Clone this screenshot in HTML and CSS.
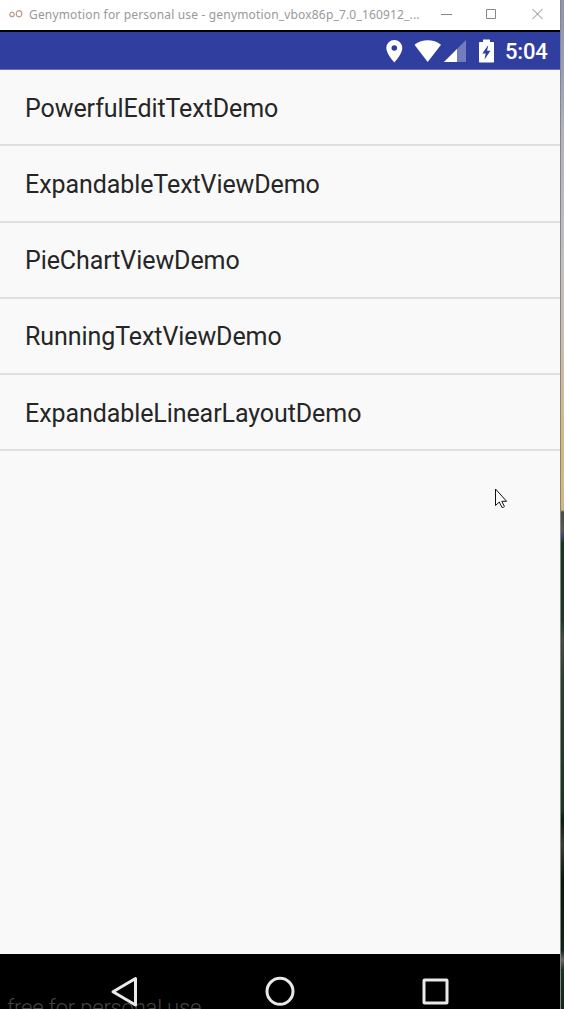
FILE: index.html
```
<!DOCTYPE html>
<html lang="en">
<head>
<meta charset="utf-8">
<title>Genymotion</title>
<link rel="stylesheet" href="styles.css">
</head>
<body>
<div class="desktop">
  <main class="window">
    <header class="titlebar">
      <svg class="logo" width="14" height="8" viewBox="0 0 14 8"><circle cx="3" cy="4.4" r="2.2"/><ellipse cx="10" cy="3.8" rx="2.8" ry="3.1"/></svg>
      <span class="title">Genymotion for personal use - genymotion_vbox86p_7.0_160912_...</span>
      <svg class="controls" width="108" height="12" viewBox="0 0 108 12"><path d="M2 6.500h11M47.500 1.500h9v9h-9zM93.500 1l10 10M103.500 1l-10 10"/></svg>
    </header>
    <div class="statusbar">
      <svg class="status-icons" width="112" height="24" viewBox="0 0 112 24">
        <path fill-rule="evenodd" d="M8.300 0a8 8 0 0 0-8 8c0 5.800 8 14.500 8 14.500s8-8.700 8-14.500a8 8 0 0 0-8-8zm0 5.200a2.800 2.800 0 1 1 0 5.600 2.800 2.800 0 0 1 0-5.600z"/>
        <path d="M28.500 4.700C36 -1.200 47.500 -1.200 55 4.700L41.700 22z"/>
        <path class="faint" d="M80 0v22H58z"/><path d="M71 9v13H58z"/>
        <path fill-rule="evenodd" d="M97 -.5h7v2.500h3.200q.8 0 .8.800v18.900q0 .8-.8.800h-13.400q-.8 0-.8-.8v-18.900q0-.8.8-.8h3.200zM102.300 5l-6 8.500h3.400l-1.200 6 6-8.700h-3.400z"/>
      </svg>
      <span class="clock">5:04</span>
    </div>
    <ul class="demos">
      <li class="demo"><span class="demo-name">PowerfulEditTextDemo</span></li>
      <li class="demo"><span class="demo-name">ExpandableTextViewDemo</span></li>
      <li class="demo"><span class="demo-name">PieChartViewDemo</span></li>
      <li class="demo"><span class="demo-name">RunningTextViewDemo</span></li>
      <li class="demo"><span class="demo-name">ExpandableLinearLayoutDemo</span></li>
    </ul>
    <footer class="navbar">
      <span class="watermark">free for personal use</span>
      <svg class="nav-icons" width="560" height="55" viewBox="0 0 560 55"><path d="M135.500 24.500v26.500L113 37.700z"/><circle cx="280" cy="37.300" r="13"/><rect x="424" y="26" width="23" height="23" rx=".5"/></svg>
    </footer>
    <svg class="cursor" width="14" height="21" viewBox="0 0 14 21"><path d="M1.500 1v16.500l3.800-3.500 2.600 5.300q1.700.6 2.500-.8l-2.600-5.200h4.800z"/></svg>
  </main>
  <aside class="wallpaper"></aside>
</div>
</body>
</html>
```
FILE: styles.css
```
* { box-sizing: border-box; }
body { margin: 0; overflow: hidden; font-family: Roboto, sans-serif; }
.desktop { display: flex; width: 564px; height: 1009px; }
.window { position: relative; display: flex; flex-direction: column; width: 560px; background: #f9f9f9; overflow: hidden; }
.titlebar { display: flex; align-items: center; flex: none; height: 30px; padding: 0 13px 2px 9px; background: #fff; }
.logo { flex: none; margin-right: 6px; fill: none; stroke: #c09b86; stroke-width: 1.2; }
.title { width: 396px; padding-top: 2px; font: 12px/18px "Noto Sans", sans-serif; letter-spacing: .17px; color: #999; white-space: nowrap; }
.controls { flex: none; margin-left: 14px; fill: none; stroke: #888; }
.statusbar { display: flex; align-items: center; flex: none; height: 40px; padding: 2px 0 0 386px; background: #303f9f; border-top: 2px solid #000; border-bottom: 1px solid #6670b5; color: #fff; }
.status-icons { flex: none; fill: #fff; overflow: visible; }
.faint { opacity: .32; }
.clock { margin-left: 7px; padding-top: 1px; font-size: 22px; font-weight: 500; line-height: 26px; letter-spacing: -.2px; }
.demos { flex: 1; margin: 0; padding: 0; list-style: none; }
.demo { display: flex; align-items: center; height: 76.25px; padding: 3px 0 0 25px; border-bottom: 2px solid #e0e0e0; }
.demo-name { font-size: 25px; line-height: 30px; letter-spacing: -.08px; color: #262626; white-space: nowrap; }
.navbar { position: relative; flex: none; height: 55px; background: #000; overflow: hidden; }
.watermark { position: absolute; left: 7px; top: 40px; font-size: 22px; font-weight: 300; line-height: 28px; letter-spacing: -.2px; color: #454545; white-space: nowrap; }
.nav-icons { position: absolute; inset: 0; fill: none; stroke: #e9e9e9; stroke-width: 3; stroke-linejoin: round; }
.cursor { position: absolute; left: 494px; top: 488px; fill: #fff; stroke: #111; stroke-width: 1; }
.wallpaper { width: 4px; border-left: 1px solid #85858a; background: linear-gradient(#8e94b0 0, #9ba0bd 80px, #b2b2ba 130px, #c0bfc1 260px, #cbbda9 350px, #d8b978 430px, #d7b776 510px, #494a43 512px, #58594f 530px, #45496a 535px, #18351f 543px, #1c3826 620px, #484b43 640px, #29412f 680px, #193622 810px, #091c10 820px, #3a3c2e 845px, #07170b 880px, #102219 950px, #666b66 960px, #173321 970px, #102817); }
```
